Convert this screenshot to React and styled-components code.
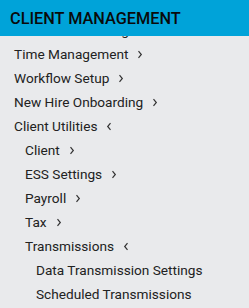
import React, { useEffect, useRef } from 'react'
import styled, { createGlobalStyle } from 'styled-components'

const GlobalStyle = createGlobalStyle`
  html, body { margin: 0; padding: 0; }
  body {
    background: #e9eaec;
    font-family: Roboto, "Liberation Sans", sans-serif;
  }
`

const menu = [
  { label: 'Attendance Management', level: 0, arrow: 'right' },
  { label: 'Time Management', level: 0, arrow: 'right' },
  { label: 'Workflow Setup', level: 0, arrow: 'right' },
  { label: 'New Hire Onboarding', level: 0, arrow: 'right' },
  { label: 'Client Utilities', level: 0, arrow: 'left' },
  { label: 'Client', level: 1, arrow: 'right' },
  { label: 'ESS Settings', level: 1, arrow: 'right' },
  { label: 'Payroll', level: 1, arrow: 'right' },
  { label: 'Tax', level: 1, arrow: 'right' },
  { label: 'Transmissions', level: 1, arrow: 'left' },
  { label: 'Data Transmission Settings', level: 2 },
  { label: 'Scheduled Transmissions', level: 2 },
]

const Chevron = ({ dir }) => (
  <svg width="6" height="9" viewBox="0 0 6 9" fill="none">
    <path
      d={dir === 'left' ? 'M4.5 1.2 L1.7 4.5 L4.5 7.8' : 'M1.5 1.2 L4.3 4.5 L1.5 7.8'}
      stroke="#333"
      strokeWidth="1.2"
    />
  </svg>
)

const App = () => {
  const panelref = useRef()

  useEffect(() => {
    if (panelref.current) panelref.current.scrollTop = 18
  }, [])

  return (
    <>
      <GlobalStyle />
      <Panel ref={panelref}>
        <Header>CLIENT MANAGEMENT</Header>
        <List>
          {menu.map((item) => (
            <Item key={item.label} level={item.level}>
              <span>{item.label}</span>
              {item.arrow && <Chevron dir={item.arrow} />}
            </Item>
          ))}
        </List>
      </Panel>
    </>
  )
}

export default App

const Panel = styled.div`
  width: 249px;
  height: 308px;
  overflow-y: auto;
  background: #e9eaec;
  scrollbar-width: none;
  &::-webkit-scrollbar {
    display: none;
  }
`

const Header = styled.div`
  position: sticky;
  top: 0;
  z-index: 2;
  height: 36px;
  display: flex;
  align-items: center;
  padding-left: 10px;
  background: #00a3d9;
  color: #0a0a0a;
  font-size: 16.3px;
  font-weight: 500;
`

const List = styled.ul`
  list-style: none;
  margin: 0;
  padding: 0 0 40px;
`

const Item = styled.li`
  height: 24px;
  display: flex;
  align-items: center;
  gap: 9px;
  padding-left: ${(p) => 14 + p.level * 11}px;
  font-size: 13.65px;
  color: #222;
  white-space: nowrap;
`
